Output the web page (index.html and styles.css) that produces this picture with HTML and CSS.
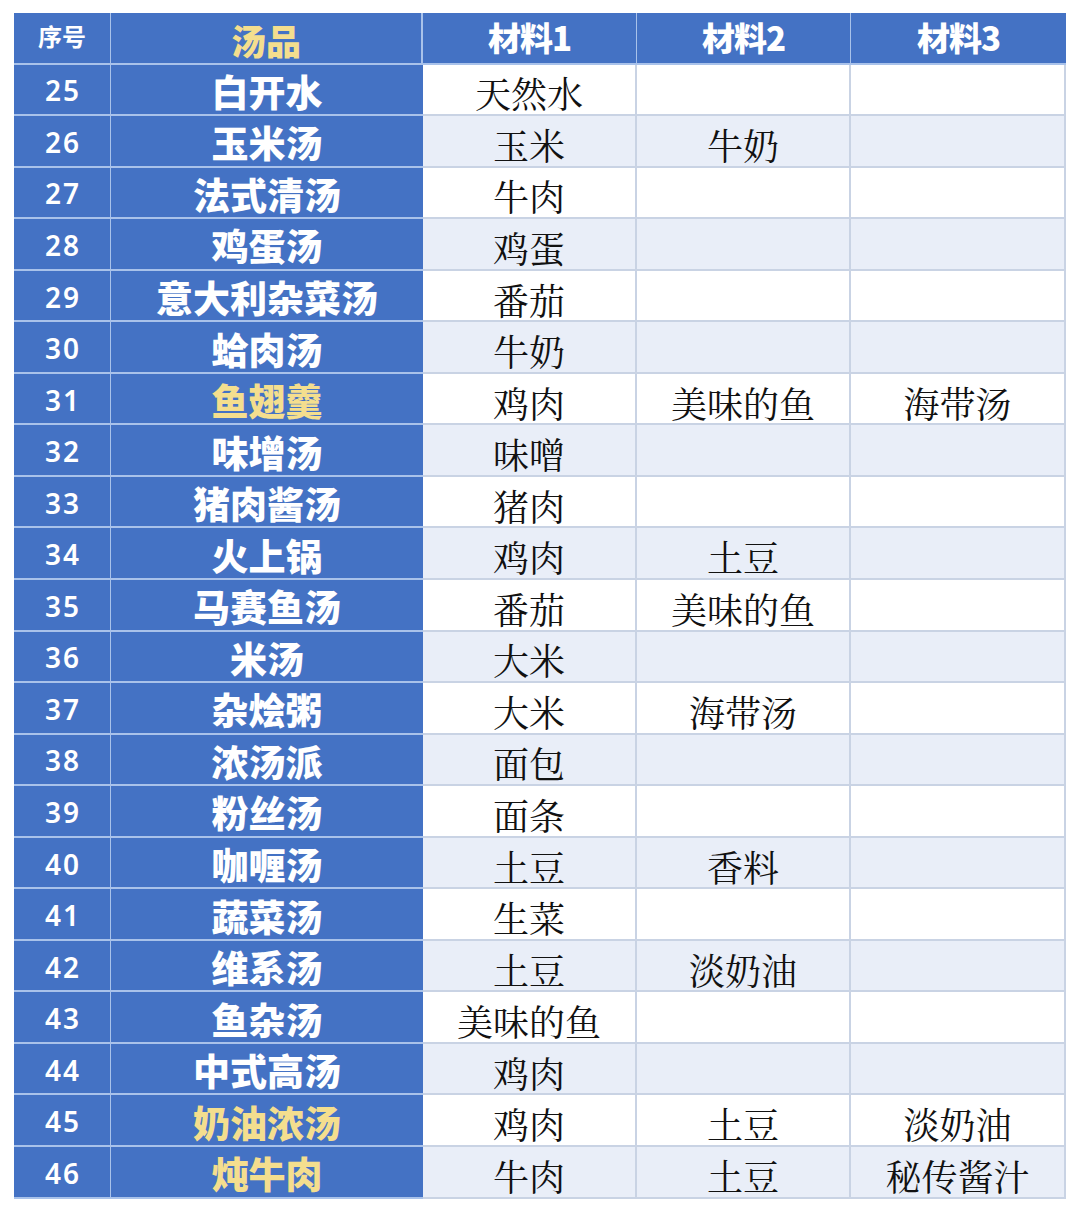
FILE: index.html
```html
<!DOCTYPE html>
<html lang="zh-CN">
<head>
<meta charset="utf-8">
<title>汤品材料</title>
<link rel="stylesheet" href="styles.css">
</head>
<body>
<div class="sheet">
  <div class="c h no">序号</div><div class="c h name yellow">汤品</div><div class="c h mat">材料1</div><div class="c h mat">材料2</div><div class="c h mat last">材料3</div>

  <div class="c no">25</div><div class="c name">白开水</div><div class="c d">天然水</div><div class="c d"></div><div class="c d last"></div>
  <div class="c no">26</div><div class="c name">玉米汤</div><div class="c d alt">玉米</div><div class="c d alt">牛奶</div><div class="c d alt last"></div>
  <div class="c no">27</div><div class="c name">法式清汤</div><div class="c d">牛肉</div><div class="c d"></div><div class="c d last"></div>
  <div class="c no">28</div><div class="c name">鸡蛋汤</div><div class="c d alt">鸡蛋</div><div class="c d alt"></div><div class="c d alt last"></div>
  <div class="c no">29</div><div class="c name">意大利杂菜汤</div><div class="c d">番茄</div><div class="c d"></div><div class="c d last"></div>
  <div class="c no">30</div><div class="c name">蛤肉汤</div><div class="c d alt">牛奶</div><div class="c d alt"></div><div class="c d alt last"></div>
  <div class="c no">31</div><div class="c name yellow">鱼翅羹</div><div class="c d">鸡肉</div><div class="c d">美味的鱼</div><div class="c d last">海带汤</div>
  <div class="c no">32</div><div class="c name">味增汤</div><div class="c d alt">味噌</div><div class="c d alt"></div><div class="c d alt last"></div>
  <div class="c no">33</div><div class="c name">猪肉酱汤</div><div class="c d">猪肉</div><div class="c d"></div><div class="c d last"></div>
  <div class="c no">34</div><div class="c name">火上锅</div><div class="c d alt">鸡肉</div><div class="c d alt">土豆</div><div class="c d alt last"></div>
  <div class="c no">35</div><div class="c name">马赛鱼汤</div><div class="c d">番茄</div><div class="c d">美味的鱼</div><div class="c d last"></div>
  <div class="c no">36</div><div class="c name">米汤</div><div class="c d alt">大米</div><div class="c d alt"></div><div class="c d alt last"></div>
  <div class="c no">37</div><div class="c name">杂烩粥</div><div class="c d">大米</div><div class="c d">海带汤</div><div class="c d last"></div>
  <div class="c no">38</div><div class="c name">浓汤派</div><div class="c d alt">面包</div><div class="c d alt"></div><div class="c d alt last"></div>
  <div class="c no">39</div><div class="c name">粉丝汤</div><div class="c d">面条</div><div class="c d"></div><div class="c d last"></div>
  <div class="c no">40</div><div class="c name">咖喱汤</div><div class="c d alt">土豆</div><div class="c d alt">香料</div><div class="c d alt last"></div>
  <div class="c no">41</div><div class="c name">蔬菜汤</div><div class="c d">生菜</div><div class="c d"></div><div class="c d last"></div>
  <div class="c no">42</div><div class="c name">维系汤</div><div class="c d alt">土豆</div><div class="c d alt">淡奶油</div><div class="c d alt last"></div>
  <div class="c no">43</div><div class="c name">鱼杂汤</div><div class="c d">美味的鱼</div><div class="c d"></div><div class="c d last"></div>
  <div class="c no">44</div><div class="c name">中式高汤</div><div class="c d alt">鸡肉</div><div class="c d alt"></div><div class="c d alt last"></div>
  <div class="c no">45</div><div class="c name yellow">奶油浓汤</div><div class="c d">鸡肉</div><div class="c d">土豆</div><div class="c d last">淡奶油</div>
  <div class="c no">46</div><div class="c name yellow">炖牛肉</div><div class="c d alt">牛肉</div><div class="c d alt">土豆</div><div class="c d alt last">秘传酱汁</div>
</div>
</body>
</html>
```
FILE: styles.css
```css
html, body {
  margin: 0;
  padding: 0;
  background: #ffffff;
}
body {
  padding: 13px 0 0 14px;
}
.sheet {
  display: grid;
  grid-template-columns: 97px 312px 214px 214px 215px;
  grid-auto-rows: 51.55px;
  width: 1052px;
}
.c {
  box-sizing: border-box;
  display: flex;
  align-items: center;
  justify-content: center;
  white-space: nowrap;
  line-height: 1;
}
.no, .name, .h {
  background: #4472c4;
  color: #ffffff;
  border-bottom: 2px solid #a9c2ea;
}
.no {
  border-right: 1px solid #a9c2ea;
  font-family: "Noto Sans", "Open Sans", sans-serif;
  font-weight: 600;
  font-size: 28px;
  letter-spacing: 2px;
  padding-top: 2px;
  padding-left: 2px;
}
.name {
  font-family: "Noto Sans CJK SC", sans-serif;
  font-weight: 900;
  font-size: 37px;
  padding-top: 4px;
}
.yellow {
  color: #f4de8e;
}
.h.no {
  font-family: "Noto Sans CJK SC", sans-serif;
  font-size: 24px;
  font-weight: 700;
  letter-spacing: 0;
  padding-top: 0;
  padding-left: 0;
  padding-bottom: 4px;
}
.h.name {
  font-size: 35px;
  border-right: 2px solid #a9c2ea;
}
.h.mat {
  font-family: "Noto Sans CJK SC", sans-serif;
  font-weight: 900;
  font-size: 33px;
  letter-spacing: -1px;
  border-right: 1px solid #a9c2ea;
}
.h.last {
  border-right: none;
}
.d {
  background: #ffffff;
  color: #111111;
  font-family: "Noto Serif CJK SC", "Noto Sans CJK SC", serif;
  font-weight: 400;
  font-size: 36px;
  border-bottom: 2px solid #c9d3e4;
  border-right: 2px solid #c9d3e4;
  padding-top: 8px;
}
.d.alt {
  background: #e9eef8;
}
```
